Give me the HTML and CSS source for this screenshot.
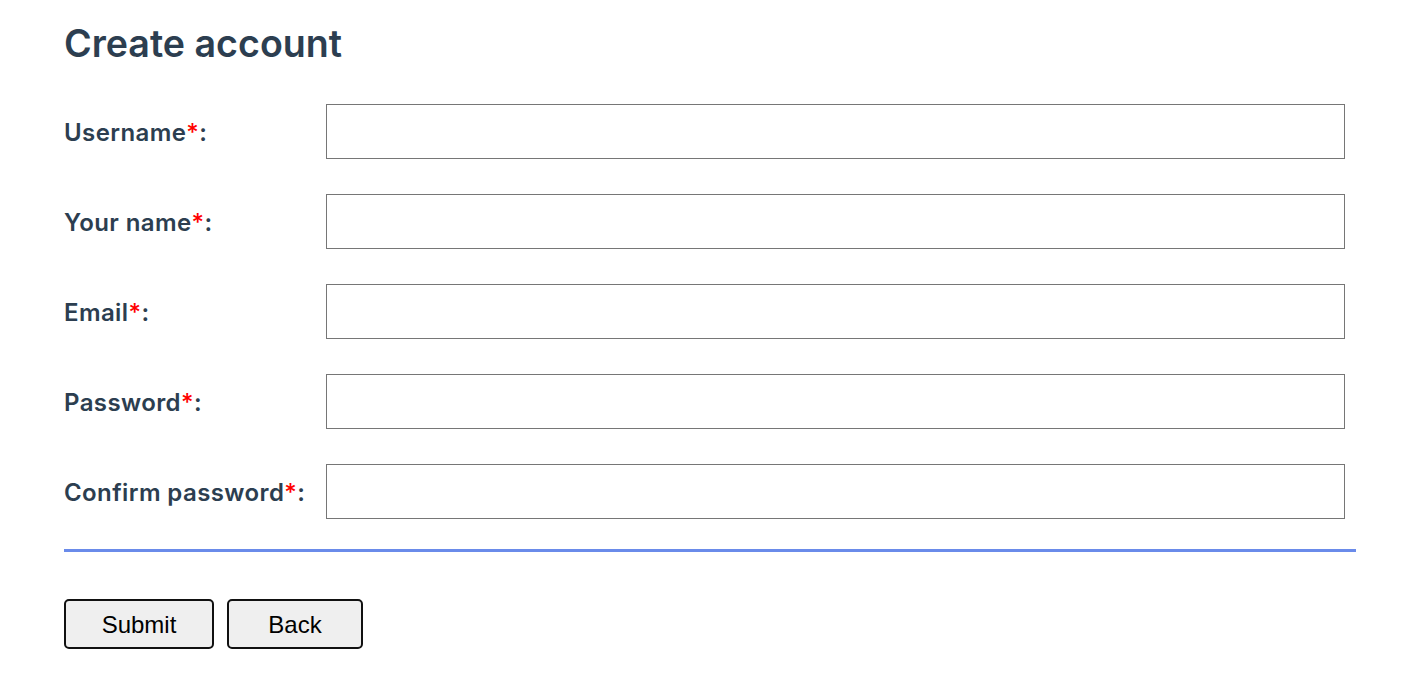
FILE: index.html
```html
<!DOCTYPE html>
<html>
<head>
<meta charset="utf-8">
<link rel="stylesheet" href="styles.css">
</head>
<body>
<div class="page">
  <h1 class="title">Create account</h1>
  <form class="form">
    <div class="row"><label class="label">Username<span class="req">*</span>:</label><input class="field" type="text"></div>
    <div class="row"><label class="label">Your name<span class="req">*</span>:</label><input class="field" type="text"></div>
    <div class="row"><label class="label">Email<span class="req">*</span>:</label><input class="field" type="text"></div>
    <div class="row"><label class="label">Password<span class="req">*</span>:</label><input class="field" type="password"></div>
    <div class="row"><label class="label">Confirm password<span class="req">*</span>:</label><input class="field" type="password"></div>
    <div class="rule"></div>
    <div class="actions">
      <button type="button" class="btn btn-submit">Submit</button>
      <button type="button" class="btn btn-back">Back</button>
    </div>
  </form>
</div>
</body>
</html>
```
FILE: styles.css
```css
html, body { margin: 0; padding: 0; background: #fff; }
.page {
  width: 1292px;
  padding: 0 0 0 64px;
  font-family: Inter, "Noto Sans", sans-serif;
  color: #2c3e50;
}
.title {
  margin: 0;
  padding-top: 22px;
  font-size: 37.6px;
  font-weight: 600;
  line-height: 44px;
  color: #2c3e50;
}
.form {
  display: flex;
  flex-direction: column;
  margin-top: 38px;
}
.row {
  display: flex;
  align-items: center;
  height: 55px;
  margin-bottom: 35px;
}
.row:nth-child(5) { margin-bottom: 30px; }
.label {
  width: 262px;
  flex: none;
  font-size: 24px;
  font-weight: 600;
  letter-spacing: 0.4px;
  padding-top: 2px;
}
.req { color: #ff0000; font-weight: 500; }
.field {
  box-sizing: border-box;
  width: 1019px;
  height: 55px;
  margin: 0;
  border: 1px solid #767676;
  border-radius: 0;
  padding: 0 8px;
  font-size: 20px;
}
.rule {
  height: 3px;
  background: #6a8bea;
}
.actions {
  display: flex;
  gap: 13px;
  margin-top: 47px;
}
.btn {
  box-sizing: border-box;
  height: 50px;
  border: 2px solid #111;
  border-radius: 5px;
  background: #efefef;
  font-family: "Liberation Sans", Arial, sans-serif;
  font-size: 24px;
  color: #000;
  padding: 2px 0 0;
}
.btn-submit { width: 150px; }
.btn-back { width: 136px; }
```
